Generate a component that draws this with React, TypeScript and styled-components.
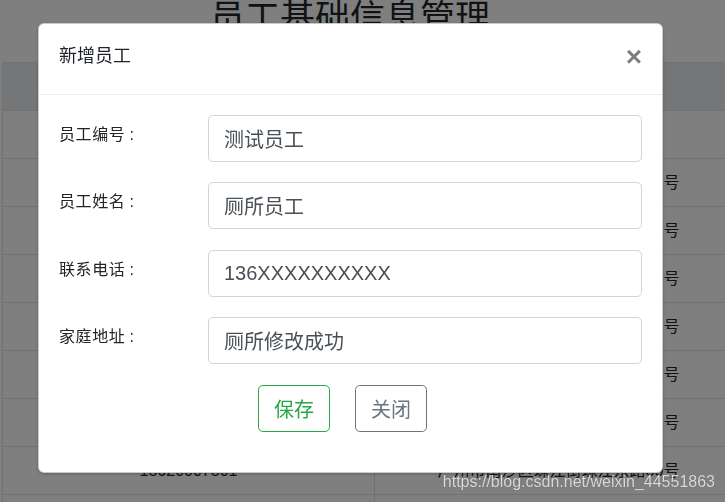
import React from "react";
import styled, { createGlobalStyle } from "styled-components";

const Global = createGlobalStyle`
  html, body { margin: 0; padding: 0; background: #fff; }
  body {
    font-family: "Liberation Sans", "Noto Sans CJK SC", sans-serif;
    color: #212529;
    overflow: hidden;
  }
  * { box-sizing: border-box; }
`;

const Page = styled.div`
  width: 725px;
  height: 502px;
  overflow: hidden;
  position: relative;
  background: #fff;
`;

const PageTitle = styled.h1`
  margin: -5px 0 0;
  height: 67px;
  padding-right: 25px;
  font-family: "Noto Sans CJK SC", sans-serif;
  font-size: 35px;
  line-height: 40px;
  font-weight: 400;
  text-align: center;
  color: #212529;
`;

const Table = styled.table`
  margin-left: 2px;
  width: 740px;
  border-collapse: separate;
  border-spacing: 0;
  table-layout: fixed;
  font-size: 16px;
`;

const HeadCell = styled.th`
  height: 48px;
  padding: 0;
  border-top: 1px solid #dee2e6;
  border-left: 1px solid #dee2e6;
  background: #e9ecef;
  font-weight: 700;
  text-align: center;
  vertical-align: middle;
`;

const Cell = styled.td`
  height: 48px;
  padding: 0;
  border-top: 1px solid #dee2e6;
  border-left: 1px solid #dee2e6;
  text-align: center;
  vertical-align: middle;
  line-height: 24px;
  white-space: nowrap;
  overflow: hidden;
`;

const Backdrop = styled.div`
  position: fixed;
  inset: 0;
  background: rgba(0, 0, 0, 0.5);
`;

const DialogLayer = styled.div`
  position: fixed;
  inset: 0;
  padding: 23px 0 0 38px;
`;

const Modal = styled.div`
  width: 625px;
  background: #fff;
  border: 1px solid rgba(0, 0, 0, 0.2);
  border-radius: 6px;
  box-shadow: 0 1px 3px rgba(0, 0, 0, 0.25);
  display: flex;
  flex-direction: column;
`;

const ModalHeader = styled.div`
  display: flex;
  align-items: center;
  justify-content: space-between;
  padding: 17px 20px 23px;
  border-bottom: 1px solid #e9ecef;
`;

const ModalTitle = styled.h5`
  margin: 0;
  font-size: 18px;
  line-height: 30px;
  font-weight: 400;
  color: #212529;
`;

const CloseButton = styled.button`
  margin-top: 2px;
  padding: 0;
  border: 0;
  background: transparent;
  font-family: "Liberation Sans", sans-serif;
  font-size: 28px;
  line-height: 1;
  font-weight: 700;
  color: #000;
  opacity: 0.5;
  cursor: pointer;
`;

const ModalBody = styled.div`
  padding: 20px 20px 40px;
  display: flex;
  flex-direction: column;
`;

const Fields = styled.div`
  display: flex;
  flex-direction: column;
  gap: 20.4px;
`;

const FieldRow = styled.div`
  display: grid;
  grid-template-columns: 149px 1fr;
  align-items: start;
`;

const FieldLabel = styled.label`
  padding-top: 8px;
  font-size: 16px;
  line-height: 24px;
  letter-spacing: 0.6px;
  color: #212529;
`;

const Colon = styled.span`
  margin-left: 4px;
`;

const TextInput = styled.input`
  display: block;
  width: 100%;
  height: 47px;
  padding: 0 15px;
  border: 1px solid #ced4da;
  border-radius: 4.8px;
  font-family: "Liberation Sans", "Noto Sans CJK SC", sans-serif;
  font-size: 20px;
  color: #495057;
  background: #fff;
  outline: none;
`;

const Actions = styled.div`
  margin-top: 21px;
  padding-right: 16px;
  display: flex;
  justify-content: center;
  gap: 25px;
`;

const ActionButton = styled.button<{ $tone: string }>`
  width: 72px;
  height: 47px;
  padding: 0;
  background: #fff;
  border: 1px solid ${(p) => p.$tone};
  border-radius: 4.8px;
  color: ${(p) => p.$tone};
  font-family: "Liberation Sans", "Noto Sans CJK SC", sans-serif;
  font-size: 20px;
  cursor: pointer;
`;

const Watermark = styled.div`
  position: fixed;
  top: 473px;
  right: 10px;
  font-family: "Liberation Sans", sans-serif;
  font-size: 16px;
  line-height: 18px;
  color: #dadada;
  text-shadow: 0 0 1px rgba(0, 0, 0, 0.35);
  white-space: nowrap;
`;

const rows: [string, string][] = [
  ["13800138000", "广州市天河区"],
  ["13926371845", "广东省广州市天河区天河北路12号"],
  ["15820136677", "广东省广州市海珠区新港中路35号"],
  ["13711452098", "广东省广州市越秀区中山五路16号"],
  ["18933620154", "广东省广州市白云区白云大道21号"],
  ["13602281936", "广东省广州市黄埔区开创大道88号"],
  ["15013578024", "广东省广州市番禺区市桥北路26号"],
  ["18620007801", "广州市南沙区珠江街珠江东路80号"],
  ["13825640917", "广东省广州市花都区新华街道19号"],
];

const fields: [string, string][] = [
  ["员工编号", "测试员工"],
  ["员工姓名", "厕所员工"],
  ["联系电话", "136XXXXXXXXXX"],
  ["家庭地址", "厕所修改成功"],
];

export default function App() {
  return (
    <>
      <Global />
      <Page>
        <PageTitle>员工基础信息管理</PageTitle>
        <Table>
          <colgroup>
            <col style={{ width: 372 }} />
            <col style={{ width: 368 }} />
          </colgroup>
          <thead>
            <tr>
              <HeadCell>联系电话</HeadCell>
              <HeadCell>家庭地址</HeadCell>
            </tr>
          </thead>
          <tbody>
            {rows.map(([phone, addr]) => (
              <tr key={phone}>
                <Cell>{phone}</Cell>
                <Cell>{addr}</Cell>
              </tr>
            ))}
          </tbody>
        </Table>
        <Backdrop />
        <DialogLayer>
          <Modal>
            <ModalHeader>
              <ModalTitle>新增员工</ModalTitle>
              <CloseButton aria-label="Close">×</CloseButton>
            </ModalHeader>
            <ModalBody>
              <Fields>
                {fields.map(([label, value]) => (
                  <FieldRow key={label}>
                    <FieldLabel>
                      {label}
                      <Colon>:</Colon>
                    </FieldLabel>
                    <TextInput defaultValue={value} />
                  </FieldRow>
                ))}
              </Fields>
              <Actions>
                <ActionButton $tone="#28a745">保存</ActionButton>
                <ActionButton $tone="#6c757d">关闭</ActionButton>
              </Actions>
            </ModalBody>
          </Modal>
        </DialogLayer>
        <Watermark>https://blog.csdn.net/weixin_44551863</Watermark>
      </Page>
    </>
  );
}
